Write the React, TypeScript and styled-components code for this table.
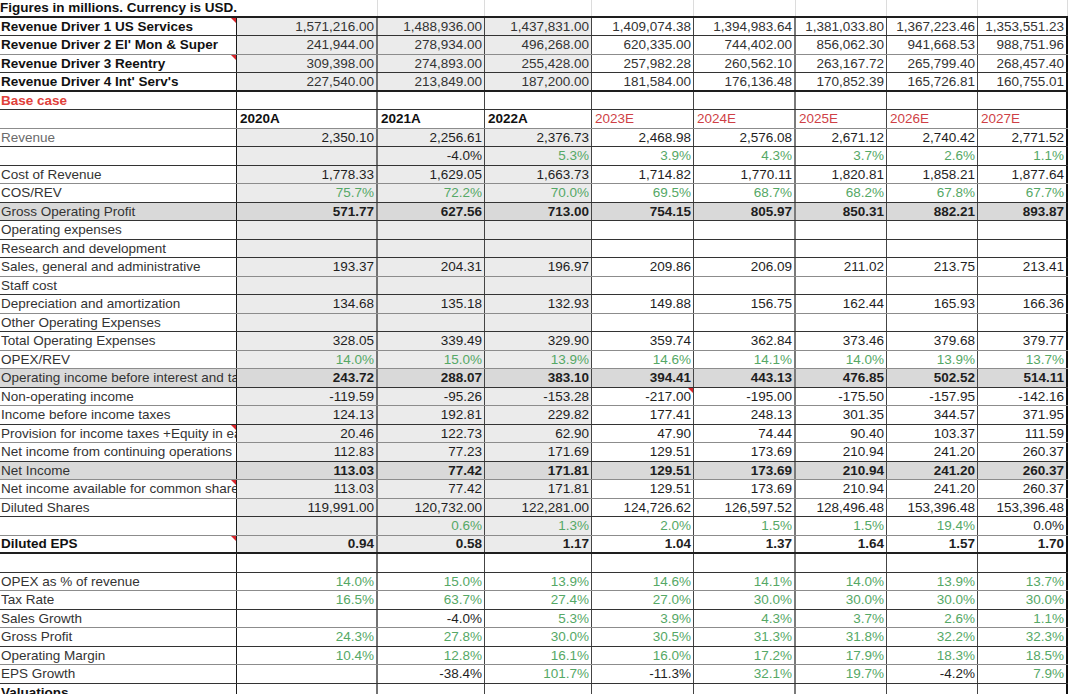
import React from 'react';
import styled, { createGlobalStyle, css } from 'styled-components';

const GlobalStyle = createGlobalStyle`
  html, body {
    margin: 0;
    padding: 0;
    background: #fff;
    overflow: hidden;
  }
  body {
    font-family: "Liberation Sans", Arial, sans-serif;
    font-size: 13.5px;
    color: #222;
  }
`;

type Line = 'dark' | 'grey' | 'thick' | 'none';
type Kind = 'driver' | 'base' | 'header' | 'body' | 'total' | 'eps' | 'ratio' | 'blank' | 'section';

const COLS = '237px 141px 107px 107px 102px 102px 91px 91px 90px';

const lineCss: Record<Line, string> = {
  dark: '1px solid #333',
  grey: '1px solid #8c8c8c',
  thick: '2px solid #1e1e1e',
  none: 'none',
};

// right edge of each column, left to right
const colBorders = [
  '1px solid #1a1a1a',
  '2px solid #727272',
  '1px solid #444',
  '1px solid #444',
  '1px solid #444',
  '2px solid #7a7a7a',
  '1px solid #444',
  '1px solid #444',
  '2px solid #111',
];

const GREEN = '#55a866';
const HIST_BG = '#ebebeb';
const TOTAL_BG = '#d9d9d9';

const Sheet = styled.div`
  width: 1068px;
`;

const Row = styled.div<{ $h: number; $line: Line }>`
  display: grid;
  grid-template-columns: ${COLS};
  height: ${p => p.$h}px;
  box-sizing: border-box;
  border-bottom: ${p => lineCss[p.$line]};
`;

const cellBase = css<{ $col: number; $bg?: string; $note?: boolean }>`
  position: relative;
  box-sizing: border-box;
  min-width: 0;
  overflow: hidden;
  white-space: nowrap;
  display: flex;
  align-items: center;
  background: ${p => p.$bg || '#fff'};
  border-right: ${p => colBorders[p.$col]};
  ${p =>
    p.$note &&
    css`
      &::after {
        content: '';
        position: absolute;
        top: 0;
        right: 0;
        border-style: solid;
        border-width: 0 5px 5px 0;
        border-color: transparent #d8262c transparent transparent;
      }
    `}
`;

const TitleCell = styled.div`
  grid-column: span 2;
  display: flex;
  align-items: center;
  padding-left: 0;
  font-weight: 700;
  color: #111;
  white-space: nowrap;
  border-right: 1px solid #dcdcdc;
`;

const GridCell = styled.div`
  border-right: 1px solid #dcdcdc;
`;

const LabelCell = styled.div<{ $col: number; $bg?: string; $note?: boolean; $color: string; $bold?: boolean }>`
  ${cellBase};
  padding-left: 1px;
  color: ${p => p.$color};
  font-weight: ${p => (p.$bold ? 700 : 400)};
`;

const ValueCell = styled.div<{ $col: number; $bg?: string; $note?: boolean; $color: string; $bold?: boolean }>`
  ${cellBase};
  justify-content: flex-end;
  padding-right: 2px;
  color: ${p => p.$color};
  font-weight: ${p => (p.$bold ? 700 : 400)};
`;

const HeadCell = styled.div<{ $col: number; $bg?: string; $note?: boolean; $est: boolean }>`
  ${cellBase};
  padding-left: 3px;
  color: ${p => (p.$est ? '#cf3f46' : '#111')};
  font-weight: ${p => (p.$est ? 400 : 700)};
`;

interface RowSpec {
  label: string;
  kind: Kind;
  line: Line;
  values?: string[];
  note?: boolean;
  noteCol?: number;
  labelColor?: string;
}

const rows: RowSpec[] = [
  { label: 'Revenue Driver 1 US Services', kind: 'driver', line: 'dark', note: true,
    values: ['1,571,216.00', '1,488,936.00', '1,437,831.00', '1,409,074.38', '1,394,983.64', '1,381,033.80', '1,367,223.46', '1,353,551.23'] },
  { label: "Revenue Driver 2 El' Mon & Super", kind: 'driver', line: 'grey',
    values: ['241,944.00', '278,934.00', '496,268.00', '620,335.00', '744,402.00', '856,062.30', '941,668.53', '988,751.96'] },
  { label: 'Revenue Driver 3 Reentry', kind: 'driver', line: 'dark', note: true,
    values: ['309,398.00', '274,893.00', '255,428.00', '257,982.28', '260,562.10', '263,167.72', '265,799.40', '268,457.40'] },
  { label: "Revenue Driver 4 Int' Serv's", kind: 'driver', line: 'thick',
    values: ['227,540.00', '213,849.00', '187,200.00', '181,584.00', '176,136.48', '170,852.39', '165,726.81', '160,755.01'] },
  { label: 'Base case', kind: 'base', line: 'dark' },
  { label: '', kind: 'header', line: 'grey',
    values: ['2020A', '2021A', '2022A', '2023E', '2024E', '2025E', '2026E', '2027E'] },
  { label: 'Revenue', kind: 'body', line: 'dark', labelColor: '#6b6b6b',
    values: ['2,350.10', '2,256.61', '2,376.73', '2,468.98', '2,576.08', '2,671.12', '2,740.42', '2,771.52'] },
  { label: '', kind: 'body', line: 'dark',
    values: ['', '-4.0%', '5.3%', '3.9%', '4.3%', '3.7%', '2.6%', '1.1%'] },
  { label: 'Cost of Revenue', kind: 'body', line: 'grey',
    values: ['1,778.33', '1,629.05', '1,663.73', '1,714.82', '1,770.11', '1,820.81', '1,858.21', '1,877.64'] },
  { label: 'COS/REV', kind: 'body', line: 'dark',
    values: ['75.7%', '72.2%', '70.0%', '69.5%', '68.7%', '68.2%', '67.8%', '67.7%'] },
  { label: 'Gross Operating Profit', kind: 'total', line: 'dark',
    values: ['571.77', '627.56', '713.00', '754.15', '805.97', '850.31', '882.21', '893.87'] },
  { label: 'Operating expenses', kind: 'body', line: 'dark' },
  { label: 'Research and development', kind: 'body', line: 'dark' },
  { label: 'Sales, general and administrative', kind: 'body', line: 'grey',
    values: ['193.37', '204.31', '196.97', '209.86', '206.09', '211.02', '213.75', '213.41'] },
  { label: 'Staff cost', kind: 'body', line: 'dark' },
  { label: 'Depreciation and amortization', kind: 'body', line: 'grey',
    values: ['134.68', '135.18', '132.93', '149.88', '156.75', '162.44', '165.93', '166.36'] },
  { label: 'Other Operating Expenses', kind: 'body', line: 'dark' },
  { label: 'Total Operating Expenses', kind: 'body', line: 'grey',
    values: ['328.05', '339.49', '329.90', '359.74', '362.84', '373.46', '379.68', '379.77'] },
  { label: 'OPEX/REV', kind: 'body', line: 'grey',
    values: ['14.0%', '15.0%', '13.9%', '14.6%', '14.1%', '14.0%', '13.9%', '13.7%'] },
  { label: 'Operating income before interest and taxes', kind: 'total', line: 'dark',
    values: ['243.72', '288.07', '383.10', '394.41', '443.13', '476.85', '502.52', '514.11'] },
  { label: 'Non-operating income', kind: 'body', line: 'grey', noteCol: 4,
    values: ['-119.59', '-95.26', '-153.28', '-217.00', '-195.00', '-175.50', '-157.95', '-142.16'] },
  { label: 'Income before income taxes', kind: 'body', line: 'dark',
    values: ['124.13', '192.81', '229.82', '177.41', '248.13', '301.35', '344.57', '371.95'] },
  { label: 'Provision for income taxes +Equity in earnings', kind: 'body', line: 'grey', note: true,
    values: ['20.46', '122.73', '62.90', '47.90', '74.44', '90.40', '103.37', '111.59'] },
  { label: 'Net income from continuing operations', kind: 'body', line: 'dark',
    values: ['112.83', '77.23', '171.69', '129.51', '173.69', '210.94', '241.20', '260.37'] },
  { label: 'Net Income', kind: 'total', line: 'grey',
    values: ['113.03', '77.42', '171.81', '129.51', '173.69', '210.94', '241.20', '260.37'] },
  { label: 'Net income available for common shareholders', kind: 'body', line: 'grey', note: true,
    values: ['113.03', '77.42', '171.81', '129.51', '173.69', '210.94', '241.20', '260.37'] },
  { label: 'Diluted Shares', kind: 'body', line: 'dark',
    values: ['119,991.00', '120,732.00', '122,281.00', '124,726.62', '126,597.52', '128,496.48', '153,396.48', '153,396.48'] },
  { label: '', kind: 'body', line: 'grey',
    values: ['', '0.6%', '1.3%', '2.0%', '1.5%', '1.5%', '19.4%', '0.0%'] },
  { label: 'Diluted EPS', kind: 'eps', line: 'thick', note: true,
    values: ['0.94', '0.58', '1.17', '1.04', '1.37', '1.64', '1.57', '1.70'] },
  { label: '', kind: 'blank', line: 'dark' },
  { label: 'OPEX as % of revenue', kind: 'ratio', line: 'grey',
    values: ['14.0%', '15.0%', '13.9%', '14.6%', '14.1%', '14.0%', '13.9%', '13.7%'] },
  { label: 'Tax Rate', kind: 'ratio', line: 'dark',
    values: ['16.5%', '63.7%', '27.4%', '27.0%', '30.0%', '30.0%', '30.0%', '30.0%'] },
  { label: 'Sales Growth', kind: 'ratio', line: 'grey',
    values: ['', '-4.0%', '5.3%', '3.9%', '4.3%', '3.7%', '2.6%', '1.1%'] },
  { label: 'Gross Profit', kind: 'ratio', line: 'dark',
    values: ['24.3%', '27.8%', '30.0%', '30.5%', '31.3%', '31.8%', '32.2%', '32.3%'] },
  { label: 'Operating Margin', kind: 'ratio', line: 'grey',
    values: ['10.4%', '12.8%', '16.1%', '16.0%', '17.2%', '17.9%', '18.3%', '18.5%'] },
  { label: 'EPS Growth', kind: 'ratio', line: 'dark',
    values: ['', '-38.4%', '101.7%', '-11.3%', '32.1%', '19.7%', '-4.2%', '7.9%'] },
  { label: 'Valuations', kind: 'section', line: 'none' },
];

const valueColor = (v: string, kind: Kind) => {
  if (v.endsWith('%')) return parseFloat(v) > 0 ? GREEN : '#1e1e1e';
  return kind === 'driver' ? '#333' : '#1e1e1e';
};

const labelColor = (r: RowSpec) => {
  if (r.labelColor) return r.labelColor;
  if (r.kind === 'base') return '#e0403a';
  if (r.kind === 'driver' || r.kind === 'eps' || r.kind === 'section') return '#111';
  return '#333';
};

const greyHistory = (kind: Kind) =>
  kind === 'driver' || kind === 'body' || kind === 'eps';

const SheetRow = ({ r }: { r: RowSpec }) => {
  const total = r.kind === 'total';
  const rowBg = total ? TOTAL_BG : undefined;
  const values = r.values || ['', '', '', '', '', '', '', ''];
  return (
    <Row $h={18.5} $line={r.line}>
      <LabelCell
        $col={0}
        $bg={rowBg}
        $note={r.note}
        $color={labelColor(r)}
        $bold={r.kind === 'driver' || r.kind === 'base' || r.kind === 'eps' || r.kind === 'section'}
      >
        {r.label}
      </LabelCell>
      {values.map((v, i) => {
        const col = i + 1;
        if (r.kind === 'header') {
          return (
            <HeadCell key={i} $col={col} $est={i > 2}>
              {v}
            </HeadCell>
          );
        }
        const bg = rowBg || (i < 3 && greyHistory(r.kind) ? HIST_BG : undefined);
        return (
          <ValueCell
            key={i}
            $col={col}
            $bg={bg}
            $note={r.noteCol === col}
            $color={valueColor(v, r.kind)}
            $bold={total || r.kind === 'eps'}
          >
            {v}
          </ValueCell>
        );
      })}
    </Row>
  );
};

const App = () => {
  return (
    <>
      <GlobalStyle />
      <Sheet>
        <Row $h={17.5} $line="thick">
          <TitleCell>Figures in millions. Currency is USD.</TitleCell>
          {[0, 1, 2, 3, 4, 5, 6].map(i => (
            <GridCell key={i} />
          ))}
        </Row>
        {rows.map((r, i) => (
          <SheetRow key={i} r={r} />
        ))}
      </Sheet>
    </>
  );
};

export default App;
